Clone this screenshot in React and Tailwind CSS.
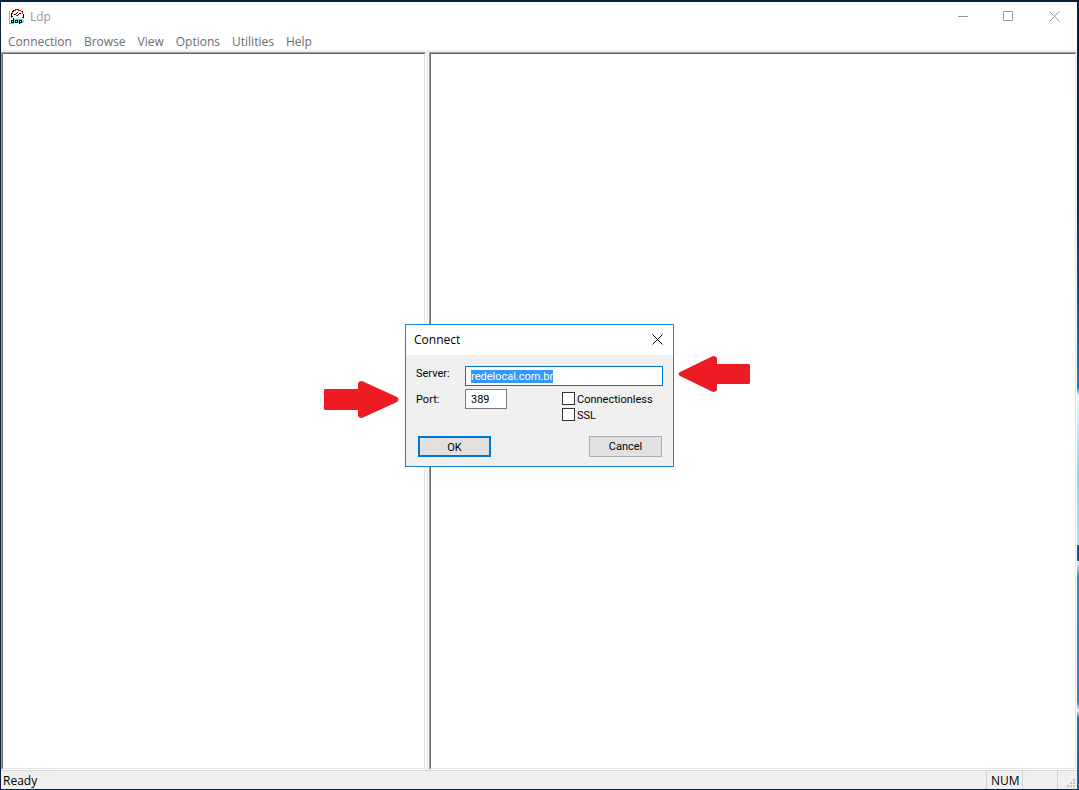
import { useEffect, useRef } from 'react';

const MENUS = ['Connection', 'Browse', 'View', 'Options', 'Utilities', 'Help'];

// one string per pixel row: c = cyan, k = black, r = red, g = green
const ICON_ROWS = [
  '......rrkr......',
  '....krr..rrr....',
  'c..kk.......rk..',
  'c..r....k....r..',
  'c.kg...k..kk.r..',
  'c.k..kk..k....k.',
  'c.k....gk.....k.',
  'c.kk..........k.',
  'c.g..........gk.',
  'c...k...........',
  'c...kccccccccc..',
  'c.kkkckkkckkk.c.',
  'c.k.kck.kck.kcc.',
  'c.kkkckkkckkkc..',
  'ccccc.....kc....',
];

const ICON_COLORS = { c: '#22e8f0', k: '#000000', r: '#e01818', g: '#108030' };

function LdpIcon() {
  return (
    <svg className="w-4 h-4" viewBox="0 0 16 16" shapeRendering="crispEdges" aria-hidden="true">
      {ICON_ROWS.map((row, y) =>
        row.split('').map((c, x) =>
          c === '.' ? null : <rect key={`${x}-${y}`} x={x} y={y} width="1" height="1" fill={ICON_COLORS[c]} />
        )
      )}
    </svg>
  );
}

function TitleBar() {
  return (
    <header className="flex h-[30px] items-center justify-between bg-white pl-2 text-[#999999]">
      <div className="flex items-center gap-[5px]">
        <LdpIcon />
        <h1 className="text-[12px] leading-4">Ldp</h1>
      </div>
      <div className="flex h-7 self-start">
        <button type="button" aria-label="Minimize" className="grid w-[46px] place-items-center">
          <svg className="w-[11px] h-[11px]" viewBox="0 0 11 11" stroke="currentColor">
            <path d="M1 5.5h10" />
          </svg>
        </button>
        <button type="button" aria-label="Maximize" className="grid w-[46px] place-items-center">
          <svg className="w-[11px] h-[11px]" viewBox="0 0 11 11" fill="none" stroke="currentColor">
            <path d="M.5.5h9v9h-9z" />
          </svg>
        </button>
        <button type="button" aria-label="Close" className="grid w-[46px] place-items-center">
          <svg className="w-[11px] h-[11px]" viewBox="0 0 11 11" stroke="currentColor">
            <path d="M.5.5l10 10M10.5.5l-10 10" />
          </svg>
        </button>
      </div>
    </header>
  );
}

function Pane({ className, label }) {
  return (
    <section
      aria-label={label}
      className={`border border-t-[#a0a0a0] border-l-[#a0a0a0] border-r-white border-b-white ${className}`}
    >
      <div className="h-full border border-t-[#696969] border-l-[#696969] border-r-[#e3e3e3] border-b-[#e3e3e3] bg-white" />
    </section>
  );
}

function StatusBar() {
  return (
    <footer className="flex h-[19px] items-stretch border-t border-[#d7d7d7] bg-[#f0f0f0] text-[12px] leading-[19px] text-black">
      <span className="flex-1 pl-0.5">Ready</span>
      <span className="w-9 border-l border-[#d0d0d0] pl-1">NUM</span>
      <span className="w-[35px] border-l border-[#d0d0d0]" />
      <span className="flex w-5 items-end justify-end border-l border-[#d0d0d0] pr-0.5 pb-0.5">
        <svg className="w-2 h-2" viewBox="0 0 8 8" fill="#bfbfbf" shapeRendering="crispEdges" aria-hidden="true">
          <path d="M6 0h2v2H6zM3 3h2v2H3zM6 3h2v2H6zM0 6h2v2H0zM3 6h2v2H3zM6 6h2v2H6z" />
        </svg>
      </span>
    </footer>
  );
}

function CheckBox({ id, children }) {
  return (
    <label htmlFor={id} className="flex h-4 items-center gap-0.5">
      <input id={id} type="checkbox" className="h-[13px] w-[13px] appearance-none border border-[#333333] bg-white" />
      <span className="pt-0.5">{children}</span>
    </label>
  );
}

function ConnectDialog() {
  const serverRef = useRef(null);

  useEffect(() => {
    serverRef.current.focus();
    serverRef.current.select();
  }, []);

  return (
    <div className="relative">
      <form
        role="dialog"
        aria-label="Connect"
        className="w-[269px] border border-[#1883d7] bg-[#f0f0f0] font-[Roboto,sans-serif] text-[11px] leading-4 text-black"
      >
        <div className="flex h-[30px] items-center justify-between bg-white pr-2.5 pl-2">
          <h2 className="font-['Open_Sans',sans-serif] text-[12px]">Connect</h2>
          <button type="button" aria-label="Close">
            <svg className="block w-[11px] h-[11px]" viewBox="0 0 11 11" stroke="currentColor">
              <path d="M.5.5l10 10M10.5.5l-10 10" />
            </svg>
          </button>
        </div>

        <div className="px-2.5 pt-[11px]">
          <div className="flex">
            <label htmlFor="server" className="w-[49px]">Server:</label>
            <input
              id="server"
              ref={serverRef}
              defaultValue="redelocal.com.br"
              className="h-5 w-[198px] border border-[#0078d7] bg-white px-[5px] pt-0.5 leading-[14px] outline-none selection:bg-[#3399ff] selection:text-white"
            />
          </div>
          <div className="mt-[3px] flex">
            <label htmlFor="port" className="w-[49px] pt-[3px]">Port:</label>
            <input
              id="port"
              defaultValue="389"
              className="h-5 w-[42px] border border-[#7a7a7a] bg-white px-[5px] pt-0.5 leading-[14px] outline-none"
            />
            <div className="ml-[55px] pt-0.5">
              <CheckBox id="connectionless">Connectionless</CheckBox>
              <CheckBox id="ssl">SSL</CheckBox>
            </div>
          </div>
        </div>

        <div className="flex justify-between pt-[13px] pr-[11px] pb-[9px] pl-3">
          <button type="submit" className="h-[21px] w-[73px] border-2 border-[#0078d7] bg-[#e1e1e1] pt-0.5">OK</button>
          <button type="button" className="h-[21px] w-[73px] border border-[#adadad] bg-[#e1e1e1] pt-0.5">Cancel</button>
        </div>
      </form>

      <svg className="absolute top-[57px] right-full mr-1.5 h-[37px] w-[75px]" viewBox="0 0 75 37" fill="#ed1c24" aria-hidden="true">
        <path d="M1 8H34V2Q35 0 38 0L73 16Q76 18.500 73 21L38 37Q35 37 34 35V29H1L0 28V9Z" />
      </svg>
      <svg className="absolute top-8 left-full ml-1 h-9 w-[72px]" viewBox="0 0 72 36" fill="#ed1c24" aria-hidden="true">
        <path d="M71 8H39V2Q38 0 35 0L2 16Q-1 18 2 20L35 36Q38 36 39 34V28H71L72 27V9Z" />
      </svg>
    </div>
  );
}

export default function App() {
  return (
    <div className="relative flex min-h-screen bg-[#05203f] pt-0.5 pb-px pl-px font-['Open_Sans',sans-serif]">
      <main className="flex min-w-0 flex-1 flex-col bg-[#f0f0f0]">
        <TitleBar />
        <nav className="flex h-[18px] items-end gap-3 bg-white pl-[7px] text-[12px] leading-4 text-[#6d6d6d]">
          {MENUS.map((menu) => (
            <button key={menu} type="button">{menu}</button>
          ))}
        </nav>
        <div className="flex flex-1 gap-[3px] pt-0.5">
          <Pane label="Tree" className="w-[425px]" />
          <Pane label="Output" className="flex-1" />
        </div>
        <StatusBar />
      </main>
      {/* sliver of the desktop wallpaper */}
      <div className="w-0.5 bg-[linear-gradient(#05203f_0%,#08294f_25%,#1b5fa5_42%,#0a84e8_49%,#e8fbff_50%,#7fd6f5_60%,#a5e4f8_69%,#174f8f_69%,#174f8f_71%,#e0f4ff_71%,#2f8fce_73%,#1f88d8_89%,#e8f6ff_90%,#1f6fb8_91%,#1b5c9c_100%)]" />
      <div className="absolute inset-0 grid place-items-center">
        <ConnectDialog />
      </div>
    </div>
  );
}
